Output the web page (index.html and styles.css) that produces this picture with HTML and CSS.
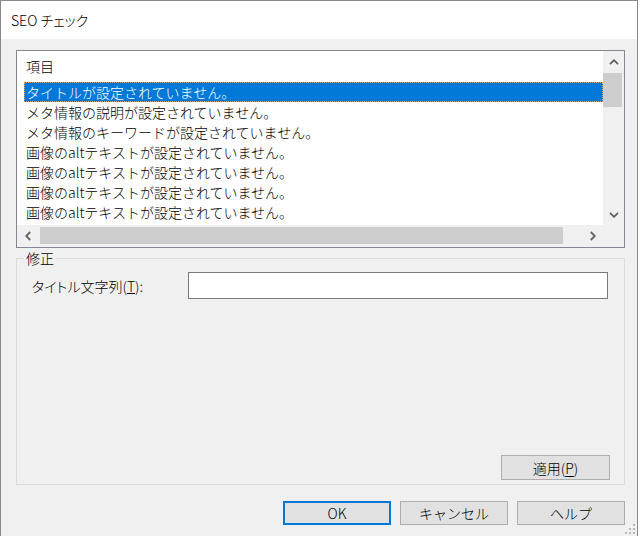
FILE: index.html
```html
<!DOCTYPE html>
<html lang="ja">
  <head>
    <meta charset="UTF-8" />
    <title>SEO チェック</title>
    <link rel="stylesheet" href="styles.css">
  </head>
  <body>
    <div class="window">
      <div class="titlebar">SEO チェック</div>

      <div class="content">
        <!-- 項目リスト -->
        <div class="listbox">
          <div class="list-view">
            <div class="list-header">項目</div>
            <ul class="list-rows">
              <li class="selected">タイトルが設定されていません。</li>
              <li>メタ情報の説明が設定されていません。</li>
              <li>メタ情報のキーワードが設定されていません。</li>
              <li>画像のaltテキストが設定されていません。</li>
              <li>画像のaltテキストが設定されていません。</li>
              <li>画像のaltテキストが設定されていません。</li>
              <li>画像のaltテキストが設定されていません。</li>
            </ul>
          </div>
          <div class="vscroll">
            <span class="arrow">
              <svg width="10" height="6" viewBox="0 0 10 6"><path d="M1 5.2 L5 1.2 L9 5.2" fill="none" stroke="#606060" stroke-width="1.8"/></svg>
            </span>
            <span class="vthumb"></span>
            <span class="track"></span>
            <span class="arrow">
              <svg width="10" height="6" viewBox="0 0 10 6"><path d="M1 0.8 L5 4.8 L9 0.8" fill="none" stroke="#606060" stroke-width="1.8"/></svg>
            </span>
          </div>
          <div class="hscroll">
            <span class="arrow">
              <svg width="6" height="10" viewBox="0 0 6 10"><path d="M5.2 1 L1.2 5 L5.2 9" fill="none" stroke="#606060" stroke-width="1.8"/></svg>
            </span>
            <span class="hthumb"></span>
            <span class="track"></span>
            <span class="arrow">
              <svg width="6" height="10" viewBox="0 0 6 10"><path d="M0.8 1 L4.8 5 L0.8 9" fill="none" stroke="#606060" stroke-width="1.8"/></svg>
            </span>
          </div>
          <div class="corner"></div>
        </div>

        <!-- 修正 -->
        <fieldset class="group">
          <legend>修正</legend>
          <div class="group-body">
            <div class="field-row">
              <label for="title-text">タイトル文字列(<u>T</u>):</label>
              <input class="text-input" id="title-text" type="text" />
            </div>
            <div class="apply-row">
              <button class="btn">適用(<u>P</u>)</button>
            </div>
          </div>
        </fieldset>

        <div class="buttons">
          <button class="btn btn-default">OK</button>
          <button class="btn">キャンセル</button>
          <button class="btn">ヘルプ</button>
        </div>
      </div>

      <svg class="grip" width="12" height="12" viewBox="0 0 12 12">
        <rect x="9" y="1" width="2" height="2" fill="#b8b8b8"/>
        <rect x="5" y="5" width="2" height="2" fill="#b8b8b8"/>
        <rect x="9" y="5" width="2" height="2" fill="#b8b8b8"/>
        <rect x="1" y="9" width="2" height="2" fill="#b8b8b8"/>
        <rect x="5" y="9" width="2" height="2" fill="#b8b8b8"/>
        <rect x="9" y="9" width="2" height="2" fill="#b8b8b8"/>
      </svg>
    </div>
  </body>
</html>
```

FILE: styles.css
```css
* {
  box-sizing: border-box;
}

body {
  margin: 0;
  background: #fff;
  font-family: "Noto Sans CJK JP", "Noto Sans", sans-serif;
  font-size: 14px;
  font-weight: 300;
  color: #000;
}

.window {
  position: relative;
  width: 638px;
  height: 536px;
  border: 1px solid #8a8a8a;
  border-bottom: none;
  background: #f0f0f0;
  display: flex;
  flex-direction: column;
}

.titlebar {
  height: 38px;
  background: #fff;
  padding: 0 10px;
  line-height: 38px;
  font-size: 14px;
  font-feature-settings: "palt";
}

.content {
  flex: 1;
  padding: 11px 12px 0 15px;
  display: flex;
  flex-direction: column;
}

/* リスト */
.listbox {
  height: 198px;
  border: 1px solid #828790;
  background: #fff;
  display: grid;
  grid-template-columns: 1fr 21px;
  grid-template-rows: 174px 1fr;
}

.list-view {
  overflow: hidden;
}

.list-header {
  height: 31px;
  padding: 5px 0 0 9px;
  line-height: 20px;
}

.list-rows {
  list-style: none;
  margin: 0;
  padding: 0 0 0 7px;
}

.list-rows li {
  height: 20px;
  line-height: 20px;
  padding-left: 2px;
  white-space: nowrap;
}

.list-rows li.selected {
  background: #0078d7;
  color: #fff;
  outline: 1px dotted #e0a060;
  outline-offset: -1px;
}

.vscroll,
.hscroll {
  background: #f0f0f0;
  display: flex;
}

.vscroll {
  flex-direction: column;
}

.arrow {
  flex: 0 0 21px;
  display: flex;
  align-items: center;
  justify-content: center;
}

.vscroll .arrow {
  height: 21px;
}

.track {
  flex: 1;
}

.vthumb {
  height: 34px;
  margin: 1px 2px 0 0;
  background: #cdcdcd;
}

.hthumb {
  width: 523px;
  margin: 2px 0 3px 2px;
  background: #cdcdcd;
}

.corner {
  background: #f0f0f0;
}

/* 修正 グループ */
.group {
  margin: 0;
  margin-top: 1px;
  padding: 0;
  border: 1px solid #dcdcdc;
  min-width: 0;
}

.group legend {
  margin-left: 7px;
  padding: 0 2px;
  line-height: 18px;
}

.group-body {
  height: 217px;
  padding: 5px 16px 4px 15px;
  display: flex;
  flex-direction: column;
  justify-content: space-between;
}

.field-row {
  display: flex;
  align-items: center;
}

.field-row label {
  width: 156px;
  font-feature-settings: "palt";
}

.text-input {
  flex: 1;
  height: 27px;
  border: 1px solid #7a7a7a;
  background: #fff;
  font: inherit;
}

.apply-row {
  display: flex;
  justify-content: flex-end;
  margin-right: -2px;
}

.btn {
  width: 108px;
  height: 24px;
  padding: 0;
  border: 1px solid #adadad;
  background: #e1e1e1;
  font-family: inherit;
  font-size: 14px;
  font-weight: 300;
  color: #000;
  line-height: 20px;
}

.apply-row .btn {
  height: 25px;
  width: 109px;
}

.btn u {
  text-underline-offset: 2px;
}

.btn-default {
  border-color: #0078d7;
  box-shadow: inset 0 0 0 1px #0078d7;
}

.buttons {
  display: flex;
  justify-content: flex-end;
  gap: 9px;
  margin-top: 16px;
}

.grip {
  position: absolute;
  right: 1px;
  bottom: 1px;
}
```
